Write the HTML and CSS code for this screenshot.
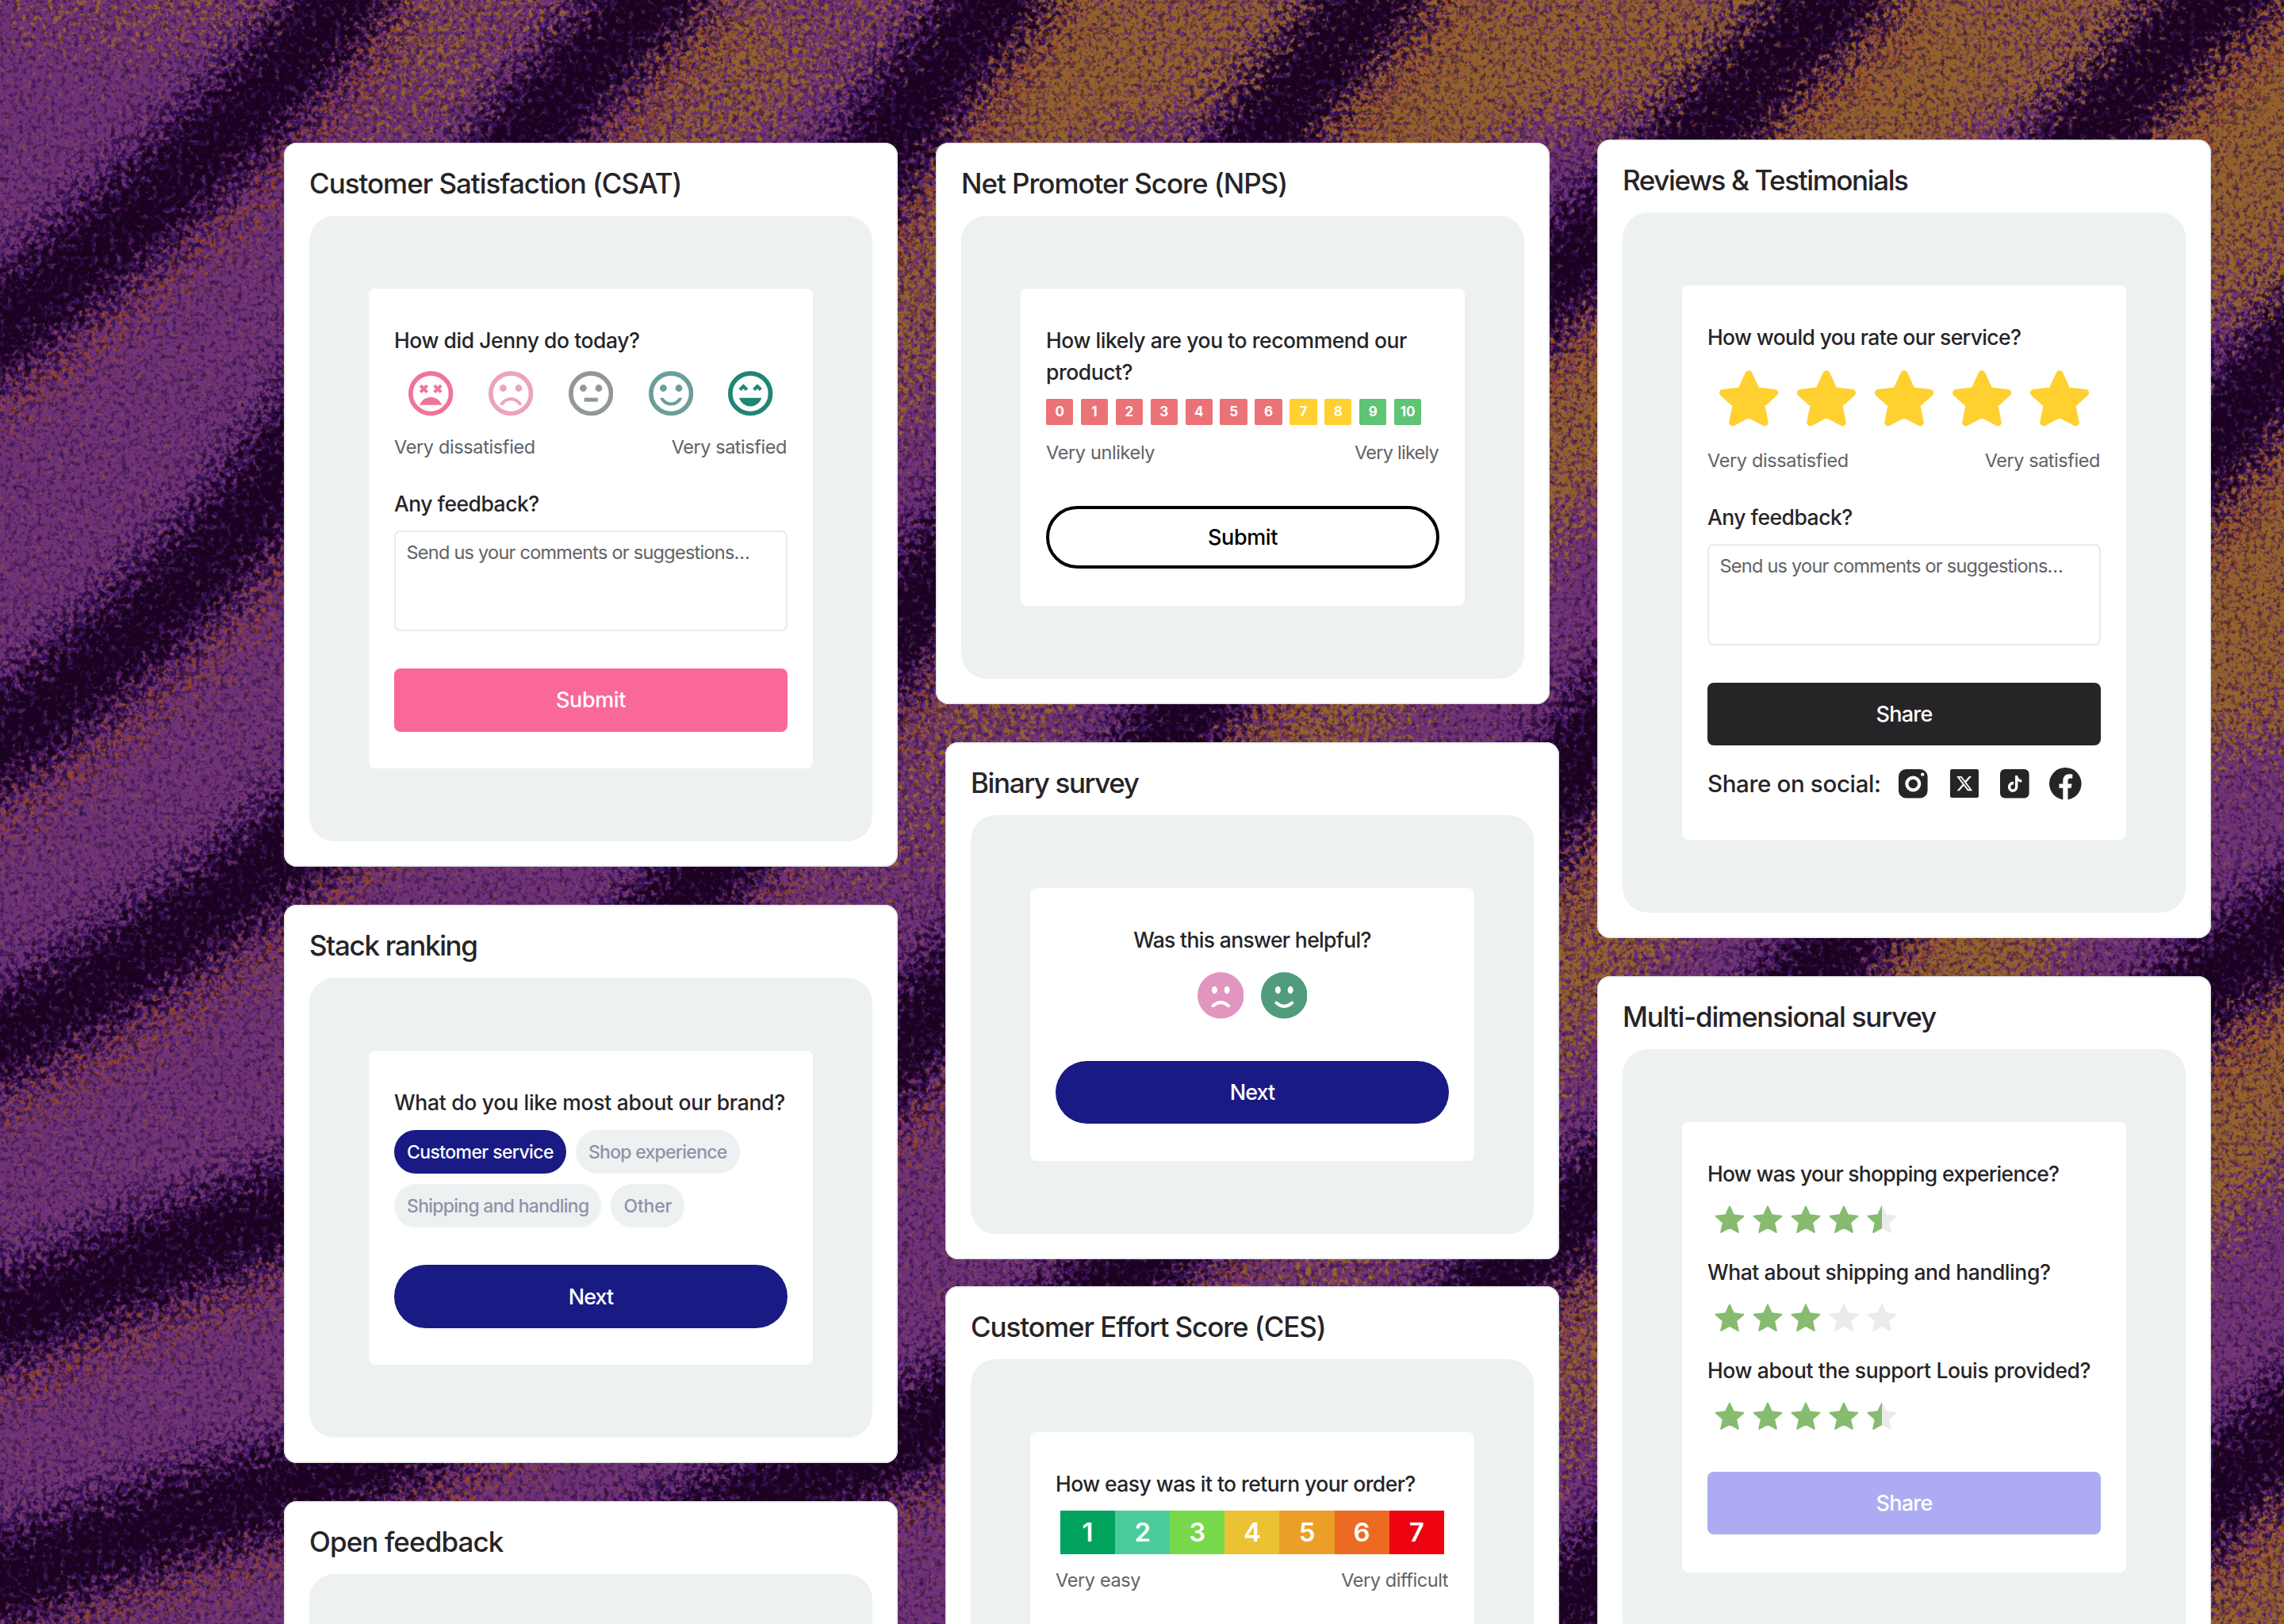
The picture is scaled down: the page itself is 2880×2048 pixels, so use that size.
FILE: index.html
```html
<!DOCTYPE html>
<html lang="en">
<head>
<meta charset="utf-8">
<title>Survey templates</title>
<link rel="stylesheet" href="styles.css">
</head>
<body>
<svg class="backdrop" viewBox="0 0 2880 2048" aria-hidden="true">
  <defs>
    <filter id="grain-brown" filterUnits="userSpaceOnUse" x="0" y="0" width="2880" height="2048" color-interpolation-filters="sRGB">
      <feGaussianBlur in="SourceAlpha" stdDeviation="38" result="soft"/>
      <feTurbulence type="fractalNoise" baseFrequency="0.15" numOctaves="3" seed="4"/>
      <feColorMatrix values="0 0 0 0 0  0 0 0 0 0  0 0 0 0 0  2.8 0 0 0 -0.9" result="noise"/>
      <feComposite in="soft" in2="noise" operator="arithmetic" k1="0" k2="0.54" k3="0.46" k4="0"/>
      <feComponentTransfer result="mask"><feFuncA type="linear" slope="5" intercept="-1.95"/></feComponentTransfer>
      <feFlood flood-color="#96622c"/>
      <feComposite in2="mask" operator="in"/>
    </filter>
    <filter id="grain-orange" filterUnits="userSpaceOnUse" x="0" y="0" width="2880" height="2048" color-interpolation-filters="sRGB">
      <feGaussianBlur in="SourceAlpha" stdDeviation="28" result="soft"/>
      <feTurbulence type="fractalNoise" baseFrequency="0.14" numOctaves="3" seed="21"/>
      <feColorMatrix values="0 0 0 0 0  0 0 0 0 0  0 0 0 0 0  2.8 0 0 0 -0.9" result="noise"/>
      <feComposite in="soft" in2="noise" operator="arithmetic" k1="0" k2="0.54" k3="0.46" k4="0"/>
      <feComponentTransfer result="mask"><feFuncA type="linear" slope="5" intercept="-2.2"/></feComponentTransfer>
      <feFlood flood-color="#93442c"/>
      <feComposite in2="mask" operator="in"/>
    </filter>
    <filter id="grain-indigo" filterUnits="userSpaceOnUse" x="0" y="0" width="2880" height="2048" color-interpolation-filters="sRGB">
      <feGaussianBlur in="SourceAlpha" stdDeviation="38" result="soft"/>
      <feTurbulence type="fractalNoise" baseFrequency="0.15" numOctaves="3" seed="9"/>
      <feColorMatrix values="0 0 0 0 0  0 0 0 0 0  0 0 0 0 0  2.8 0 0 0 -0.9" result="noise"/>
      <feComposite in="soft" in2="noise" operator="arithmetic" k1="0" k2="0.52" k3="0.48" k4="0"/>
      <feComponentTransfer result="mask"><feFuncA type="linear" slope="4" intercept="-1.65"/></feComponentTransfer>
      <feFlood flood-color="#35105a"/>
      <feComposite in2="mask" operator="in"/>
    </filter>
    <filter id="grain-dark" filterUnits="userSpaceOnUse" x="0" y="0" width="2880" height="2048" color-interpolation-filters="sRGB">
      <feGaussianBlur in="SourceAlpha" stdDeviation="30" result="soft"/>
      <feTurbulence type="fractalNoise" baseFrequency="0.13" numOctaves="3" seed="13"/>
      <feColorMatrix values="0 0 0 0 0  0 0 0 0 0  0 0 0 0 0  2.8 0 0 0 -0.9" result="noise"/>
      <feComposite in="soft" in2="noise" operator="arithmetic" k1="0" k2="0.54" k3="0.46" k4="0"/>
      <feComponentTransfer result="mask"><feFuncA type="linear" slope="3.2" intercept="-1.17"/></feComponentTransfer>
      <feFlood flood-color="#1b0220"/>
      <feComposite in2="mask" operator="in"/>
    </filter>
    <filter id="speckle" filterUnits="userSpaceOnUse" x="0" y="0" width="2880" height="2048" color-interpolation-filters="sRGB">
      <feTurbulence type="fractalNoise" baseFrequency="0.17" numOctaves="3" seed="30"/>
      <feColorMatrix values="0 0 0 0 0.16  0 0 0 0 0.05  0 0 0 0 0.34  5 0 0 0 -2.75"/>
    </filter>
    <g id="bands">
      <path d="M470 -60Q380 80 240 210T-60 460"/>
      <path d="M880 -60Q740 80 672 160Q500 400 350 600Q220 780 -60 980"/>
      <path d="M1310 -60Q1200 60 1124 170Q760 700 350 1080Q180 1220 -60 1340"/>
      <path d="M1790 -60Q1690 40 1600 160Q1380 480 1150 770Q1000 950 878 1117Q620 1430 350 1530Q180 1590 -60 1690"/>
      <path d="M2370 -60Q2260 50 2146 170Q2070 250 1990 320Q1740 560 1485 912Q1320 1140 1150 1300Q740 1760 350 1880Q180 1920 -60 2020"/>
      <path d="M2860 -60Q2750 40 2643 160Q2300 560 1990 960Q1740 1330 1420 1605Q1290 1720 1150 1810Q800 1960 500 2120"/>
      <path d="M2960 380Q2880 450 2830 510Q2560 830 2310 1205Q2140 1400 1990 1525Q1800 1700 1600 1900L1400 2100"/>
      <path d="M2960 1120Q2860 1180 2780 1240Q2400 1640 1990 2010L1860 2120"/>
      <path d="M2960 1740Q2780 1880 2560 2120"/>
    </g>
    <linearGradient id="sun" gradientUnits="userSpaceOnUse" x1="2300" y1="300" x2="1000" y2="1250">
      <stop offset="0" stop-color="#fff"/><stop offset=".35" stop-color="#ccc"/><stop offset=".7" stop-color="#888"/><stop offset="1" stop-color="#000"/>
    </linearGradient>
    <mask id="sunny" maskUnits="userSpaceOnUse" x="-200" y="-200" width="3300" height="2500"><rect x="-200" y="-200" width="3300" height="2500" fill="url(#sun)"/></mask>
  </defs>
  <rect width="2880" height="2048" fill="#703277"/>
  <g filter="url(#grain-brown)">
    <g mask="url(#sunny)">
      <use href="#bands" class="band" x="100" y="100" stroke-width="180"/>
    </g>
    <path d="M1300 -60H2900V60L2700 160H1300L1200 100Z" opacity=".75"/>
    <path d="M-60 -60H1300L1160 110L40 60Z" opacity=".34"/>
    <path d="M2800 100H2960V420L2800 440ZM2800 560H2960V960L2800 940Z" opacity=".7"/>
  </g>
  <g filter="url(#grain-orange)"><use href="#bands" class="band" x="48" y="66" stroke-width="60" opacity=".62"/></g>
  <rect width="2880" height="2048" filter="url(#speckle)" opacity=".6"/>
  <g filter="url(#grain-indigo)"><use href="#bands" class="band" stroke-width="140" opacity=".8"/></g>
  <g filter="url(#grain-dark)"><use href="#bands" class="band" stroke-width="100"/></g>
</svg>

<svg class="symbols" aria-hidden="true">
  <symbol id="star-lg" viewBox="-37 0 74 71">
    <path d="M0 4.7L9.6 25.6L32.6 28.4L15.8 43.4L20.2 65.8L0 55L-20.2 65.8L-15.8 43.4L-32.6 28.4L-9.6 25.6Z" fill="#ffd02f" stroke="#ffd02f" stroke-width="9" stroke-linejoin="round"/>
  </symbol>
  <symbol id="star-sm" viewBox="-19 0 38 36">
    <path d="M0 1.6L4.9 12.2L17.4 13.7L8.1 21.8L10.8 34L0 27.8L-10.8 34L-8.1 21.8L-17.4 13.7L-4.9 12.2Z" fill="currentColor" stroke="currentColor" stroke-width="2" stroke-linejoin="round"/>
  </symbol>
  <symbol id="star-half" viewBox="-19 0 38 36">
    <path d="M0 1.6L4.9 12.2L17.4 13.7L8.1 21.8L10.8 34L0 27.8L-10.8 34L-8.1 21.8L-17.4 13.7L-4.9 12.2Z" fill="#ebebeb" stroke="#ebebeb" stroke-width="2" stroke-linejoin="round"/>
    <path d="M0 .6L-1 1.4L-5.5 11.3L-17.6 12.7Q-19 13.5 -18 14.6L-9.3 22.2L-11.8 34Q-11.6 35.3 -10.4 34.9L0 28.9Z" fill="#86bb70"/>
  </symbol>
</svg>

<main class="board">
  <div class="column column-left">
    <section class="card csat">
      <h2 class="title">Customer Satisfaction (CSAT)</h2>
      <div class="panel"><div class="survey">
        <p class="question">How did Jenny do today?</p>
        <div class="faces">
          <svg viewBox="-28.2 -28.2 56.4 56.4" color="#f07398"><circle r="25.3" class="ring"/><path d="M-13 -10L-4.6 -1.6M-4.6 -10L-13 -1.6M4.6 -10L13 -1.6M13 -10L4.6 -1.6" class="line cross"/><path d="M-14 14.6A14.8 14.8 0 0 1 14 14.6Z" class="solid"/></svg>
          <svg viewBox="-28.2 -28.2 56.4 56.4" color="#eba4bf"><circle r="25.3" class="ring"/><circle cx="-9.8" cy="-6.7" r="4.4" class="solid"/><circle cx="9.8" cy="-6.7" r="4.4" class="solid"/><path d="M-14.2 14.6A15.2 15.2 0 0 1 14.2 14.6H9.6A11 11 0 0 0 -9.6 14.6Z" class="solid"/></svg>
          <svg viewBox="-28.2 -28.2 56.4 56.4" color="#929896"><circle r="25.3" class="ring"/><circle cx="-9.8" cy="-6.7" r="4.4" class="solid"/><circle cx="9.8" cy="-6.7" r="4.4" class="solid"/><rect x="-8.6" y="5.4" width="17.2" height="5" class="solid"/></svg>
          <svg viewBox="-28.2 -28.2 56.4 56.4" color="#6b9e9a"><circle r="25.3" class="ring"/><circle cx="-9.8" cy="-6.7" r="4.4" class="solid"/><circle cx="9.8" cy="-6.7" r="4.4" class="solid"/><path d="M-14.2 5.6A15.2 15.2 0 0 0 14.2 5.6H9.6A11 11 0 0 1 -9.6 5.6Z" class="solid"/></svg>
          <svg viewBox="-28.2 -28.2 56.4 56.4" color="#1f8577"><circle r="25.3" class="ring"/><path d="M-13.2 -4.6L-8.8 -9L-4.4 -4.6M4.4 -4.6L8.8 -9L13.2 -4.6" class="line thick"/><path d="M-14.2 5.6A14.8 14.8 0 0 0 14.2 5.6Z" class="solid"/></svg>
        </div>
        <div class="labels"><span class="low">Very dissatisfied</span><span class="high">Very satisfied</span></div>
        <p class="question prompt">Any feedback?</p>
        <div class="textarea">Send us your comments or suggestions…</div>
        <div class="button pink submit">Submit</div>
      </div></div>
    </section>

    <section class="card stack">
      <h2 class="title">Stack ranking</h2>
      <div class="panel"><div class="survey">
        <p class="question">What do you like most about our brand?</p>
        <div class="chips">
          <span class="chip chip-service">Customer service</span>
          <span class="chip chip-shop">Shop experience</span>
          <span class="chip chip-shipping">Shipping and handling</span>
          <span class="chip chip-other">Other</span>
        </div>
        <div class="button navy next">Next</div>
      </div></div>
    </section>

    <section class="card open">
      <h2 class="title">Open feedback</h2>
      <div class="panel"></div>
    </section>
  </div>

  <div class="column column-middle">
    <section class="card nps">
      <h2 class="title">Net Promoter Score (NPS)</h2>
      <div class="panel"><div class="survey">
        <p class="question">How likely are you to recommend our<br>product?</p>
        <div class="scores">
          <span class="score red">0</span><span class="score red">1</span><span class="score red">2</span><span class="score red">3</span><span class="score red">4</span><span class="score red">5</span><span class="score red">6</span><span class="score yellow">7</span><span class="score yellow">8</span><span class="score green">9</span><span class="score green">10</span>
        </div>
        <div class="labels"><span class="low">Very unlikely</span><span class="high">Very likely</span></div>
        <div class="button outline submit">Submit</div>
      </div></div>
    </section>

    <div class="shifted">
      <section class="card binary">
        <h2 class="title">Binary survey</h2>
        <div class="panel"><div class="survey">
          <p class="question">Was this answer helpful?</p>
          <div class="pair">
            <svg viewBox="-29.3 -29.3 58.6 58.6"><circle r="29.3" fill="#e096be"/><ellipse cx="-7.9" cy="-6.8" rx="3.5" ry="4.7" fill="#fff"/><ellipse cx="7.9" cy="-6.8" rx="3.5" ry="4.7" fill="#fff"/><path d="M-9.8 13.2Q0 4.6 9.8 13.2" class="mouth"/></svg>
            <svg viewBox="-29.3 -29.3 58.6 58.6"><circle r="29.3" fill="#509c7c"/><ellipse cx="-7.9" cy="-6.8" rx="3.5" ry="4.7" fill="#fff"/><ellipse cx="7.9" cy="-6.8" rx="3.5" ry="4.7" fill="#fff"/><path d="M-9.8 9.4Q0 18 9.8 9.4" class="mouth"/></svg>
          </div>
          <div class="button navy next">Next</div>
        </div></div>
      </section>

      <section class="card ces">
        <h2 class="title">Customer Effort Score (CES)</h2>
        <div class="panel"><div class="survey">
          <p class="question">How easy was it to return your order?</p>
          <div class="effort">
            <span class="step step-1">1</span><span class="step step-2">2</span><span class="step step-3">3</span><span class="step step-4">4</span><span class="step step-5">5</span><span class="step step-6">6</span><span class="step step-7">7</span>
          </div>
          <div class="labels"><span class="low">Very easy</span><span class="high">Very difficult</span></div>
        </div></div>
      </section>
    </div>
  </div>

  <div class="column column-right">
    <section class="card reviews">
      <h2 class="title">Reviews &amp; Testimonials</h2>
      <div class="panel"><div class="survey">
        <p class="question">How would you rate our service?</p>
        <div class="stars-lg">
          <svg><use href="#star-lg"/></svg><svg><use href="#star-lg"/></svg><svg><use href="#star-lg"/></svg><svg><use href="#star-lg"/></svg><svg><use href="#star-lg"/></svg>
        </div>
        <div class="labels"><span class="low">Very dissatisfied</span><span class="high">Very satisfied</span></div>
        <p class="question prompt">Any feedback?</p>
        <div class="textarea">Send us your comments or suggestions…</div>
        <div class="button black share">Share</div>
        <div class="social">
          <span class="social-label">Share on social:</span>
          <svg class="instagram" viewBox="0 0 36.6 36.6"><rect width="36.6" height="36.6" rx="9.5" fill="#262427"/><circle cx="18.3" cy="18.5" r="7.9" fill="none" stroke="#fff" stroke-width="4.2"/><circle cx="30.2" cy="6.6" r="2.2" fill="#fff"/></svg>
          <svg class="x" viewBox="0 0 36 36"><rect width="36" height="36" rx="2.5" fill="#262427"/><path transform="translate(7 6.9) scale(.93)" fill="#fff" d="M18.244 2.25h3.308l-7.227 8.26 8.502 11.24H16.17l-5.214-6.817L4.99 21.75H1.68l7.73-8.835L1.254 2.25H8.08l4.713 6.231zm-1.161 17.52h1.833L7.084 4.126H5.117z"/></svg>
          <svg class="tiktok" viewBox="0 0 36.6 36.6"><rect width="36.6" height="36.6" rx="6" fill="#262427"/><path transform="translate(8.6 8) scale(.83 .87)" fill="#fff" d="M12.525.02c1.31-.02 2.61-.01 3.91-.02.08 1.53.63 3.09 1.75 4.17 1.12 1.11 2.7 1.62 4.24 1.79v4.03c-1.44-.05-2.89-.35-4.2-.97-.57-.26-1.1-.59-1.62-.93-.01 2.92.01 5.84-.02 8.75-.08 1.4-.54 2.79-1.35 3.94-1.31 1.92-3.58 3.17-5.91 3.21-1.43.08-2.86-.31-4.08-1.03-2.02-1.19-3.44-3.37-3.65-5.71-.02-.5-.03-1-.01-1.49.18-1.9 1.12-3.72 2.58-4.96 1.66-1.44 3.98-2.13 6.15-1.72.02 1.48-.04 2.96-.04 4.44-.99-.32-2.15-.23-3.02.37-.63.41-1.11 1.04-1.36 1.75-.21.51-.15 1.07-.14 1.61.24 1.64 1.82 3.02 3.5 2.87 1.12-.01 2.19-.66 2.77-1.61.19-.33.4-.67.41-1.06.1-1.79.06-3.57.07-5.36.01-4.03-.01-8.05.02-12.07z"/></svg>
          <svg class="facebook" viewBox="-20.3 -20.3 40.6 40.6"><circle r="20.3" fill="#262427"/><path fill="#fff" d="M-3 21V5.5h-4.9V.2H-3v-3.5c0-5.8 3-8.8 8-8.8 1.6 0 3 .1 4 .3v5H6.6c-2.6 0-3.4 1.3-3.4 3.3V.2h5l-.9 5.3H3.2V21z"/></svg>
        </div>
      </div></div>
    </section>

    <section class="card multi">
      <h2 class="title">Multi-dimensional survey</h2>
      <div class="panel"><div class="survey">
        <p class="question q-shopping">How was your shopping experience?</p>
        <div class="stars-sm">
          <svg><use href="#star-sm"/></svg><svg><use href="#star-sm"/></svg><svg><use href="#star-sm"/></svg><svg><use href="#star-sm"/></svg><svg><use href="#star-half"/></svg>
        </div>
        <p class="question q-shipping">What about shipping and handling?</p>
        <div class="stars-sm">
          <svg><use href="#star-sm"/></svg><svg><use href="#star-sm"/></svg><svg><use href="#star-sm"/></svg><svg class="empty"><use href="#star-sm"/></svg><svg class="empty"><use href="#star-sm"/></svg>
        </div>
        <p class="question q-support">How about the support Louis provided?</p>
        <div class="stars-sm">
          <svg><use href="#star-sm"/></svg><svg><use href="#star-sm"/></svg><svg><use href="#star-sm"/></svg><svg><use href="#star-sm"/></svg><svg><use href="#star-half"/></svg>
        </div>
        <div class="button lilac share">Share</div>
      </div></div>
    </section>
  </div>
</main>
</body>
</html>
```
FILE: styles.css
```css
* { box-sizing: border-box; }

body {
  margin: 0;
  width: 2880px;
  height: 2048px;
  overflow: hidden;
  position: relative;
  background: #6b3072;
  font-family: Inter, "Open Sans", sans-serif;
  color: #262427;
}

p, h2 { margin: 0; font-weight: 500; }
svg { display: block; }

/* Grainy striped backdrop behind the cards */
.backdrop {
  position: absolute;
  left: 0;
  top: 0;
  width: 2880px;
  height: 2048px;
}
.symbols { position: absolute; width: 0; height: 0; }
.band { fill: none; stroke: #000; }

.board {
  position: relative;
  display: grid;
  grid-template-columns: 774px 786px 774px;
  column-gap: 48px;
  align-items: start;
  padding: 176px 0 0 358px;
  height: 2048px;
  overflow: hidden;
}
.column { display: flex; flex-direction: column; gap: 48px; }
.column-left, .column-middle { padding-top: 4px; }
.shifted { display: flex; flex-direction: column; gap: 34px; padding-left: 12px; }

/* Card shell */
.card {
  width: 774px;
  padding: 29px 32px 32px;
  background: #fff;
  border-radius: 16px;
  box-shadow: inset 0 0 0 1.5px #e2e4e4;
}
.title { font-size: 35px; line-height: 44px; margin-bottom: 19px; white-space: nowrap; }
.panel { background: #edf1f2; border-radius: 32px; padding: 92px 75px; }
.survey { background: #fff; border-radius: 8px; padding: 45px 32px 46.7px; }

.question { font-size: 26.5px; line-height: 40px; white-space: nowrap; letter-spacing: -0.45px; }
.prompt { margin-top: 35px; letter-spacing: -0.5px; }
.labels {
  display: flex;
  justify-content: space-between;
  font-size: 23.5px;
  line-height: 32px;
  color: #626264;
  padding-right: 1px;
  letter-spacing: -0.37px;
}
.high { letter-spacing: -0.45px; }
.textarea {
  margin-top: 14px;
  height: 127.5px;
  border: 2px solid #e9e9f0;
  border-radius: 8px;
  padding: 10px 13.5px;
  font-size: 23.5px;
  line-height: 32px;
  letter-spacing: -0.75px;
  color: #626264;
}
.button {
  height: 79.2px;
  border-radius: 8px;
  display: flex;
  align-items: center;
  justify-content: center;
  font-size: 27px;
  font-weight: 500;
  color: #fff;
}
.submit { letter-spacing: -0.4px; }
.share { letter-spacing: -0.75px; }
.next { letter-spacing: -1px; }
.pink { background: #fa6899; }
.navy { background: #191a83; border-radius: 40px; }
.black { background: #262427; }
.lilac { background: #adacf2; }
.outline { background: #fff; color: #000; border: 4px solid #000; border-radius: 40px; }

/* CSAT */
.csat .title { letter-spacing: -1.04px; }
.faces { display: flex; gap: 44.4px; margin: 19.3px 0 0 18.3px; }
.faces svg { width: 56.4px; height: 56.4px; }
.ring { fill: none; stroke: currentColor; stroke-width: 5.7; }
.solid { fill: currentColor; }
.line { fill: none; stroke: currentColor; }
.thick { stroke-width: 4.3; }
.cross { stroke-width: 4; }
.mouth { fill: none; stroke: #fff; stroke-width: 4; stroke-linecap: round; }
.csat .labels { margin-top: 23px; }
.csat .button, .reviews .button { margin-top: 47.2px; }

/* Stack ranking */
.stack .title { letter-spacing: -1.34px; }
.stack .question { letter-spacing: -0.28px; }
.chips { display: flex; flex-wrap: wrap; gap: 12.3px 12px; margin-top: 14.5px; }
.chip {
  height: 55.7px;
  line-height: 56.5px;
  padding: 0 16px;
  border-radius: 28px;
  background: #edf1f2;
  color: #9092a8;
  font-size: 23px;
  font-weight: 500;
  white-space: nowrap;
}
.chip-service { background: #191a83; color: #fff; letter-spacing: -0.6px; }
.chip-shop { letter-spacing: -0.73px; }
.chip-shipping { letter-spacing: -0.73px; }
.chip-other { letter-spacing: -0.2px; }
.stack .button { margin-top: 47px; }

/* Open feedback */
.open .title { letter-spacing: -0.9px; }
.open .panel { height: 400px; }

/* NPS */
.nps .title { letter-spacing: -1.05px; }
.scores { display: flex; gap: 9.6px; margin: 13.6px 0 0 0; }
.score {
  width: 34.3px;
  height: 33.5px;
  line-height: 33.5px;
  border-radius: 2px;
  text-align: center;
  color: #fff;
  font-size: 17px;
  font-weight: 700;
}
.red { background: #eb7377; }
.yellow { background: #ffd02f; }
.green { background: #5fc475; }
.nps .labels { margin-top: 18.7px; }
.nps .high { letter-spacing: -0.75px; }
.nps .button { margin-top: 51.3px; }

/* Binary */
.binary .title { letter-spacing: -1.4px; }
.binary .question { text-align: center; letter-spacing: -0.66px; }
.pair { display: flex; justify-content: center; gap: 21.5px; margin-top: 21px; }
.pair svg { width: 58.6px; height: 58.6px; }
.binary .button { margin-top: 53.2px; }

/* CES */
.ces .title { letter-spacing: -1.07px; }
.ces .question { letter-spacing: -0.56px; }
.effort { display: grid; grid-template-columns: repeat(7, 1fr); width: 483.8px; margin: 14px 0 0 6px; }
.step {
  height: 55px;
  line-height: 55px;
  text-align: center;
  color: #fff;
  font-size: 33px;
  font-weight: 600;
}
.step-1 { background: #02a35f; }
.step-2 { background: #4bcb9c; }
.step-3 { background: #76d84a; }
.step-4 { background: #eac234; }
.step-5 { background: #eb9f28; }
.step-6 { background: #ed6a22; }
.step-7 { background: #ed020f; }
.ces .labels { margin-top: 17.3px; }
.ces .survey { height: 400px; }

/* Reviews */
.reviews .title { letter-spacing: -1.4px; }
.reviews .question { letter-spacing: -0.63px; }
.reviews .prompt { letter-spacing: -0.5px; }
.reviews .survey { padding-bottom: 51px; }
.stars-lg { display: flex; gap: 24px; margin: 22.4px 0 0 14.7px; }
.stars-lg svg { width: 74px; height: 71px; }
.reviews .labels { margin-top: 27px; }
.social { display: flex; align-items: center; height: 40px; margin-top: 28px; }
.social-label { font-size: 29.5px; font-weight: 500; letter-spacing: -0.35px; width: 241px; white-space: nowrap; }
.instagram { width: 36.6px; height: 36.6px; margin-right: 28px; }
.x { width: 36px; height: 36px; margin-right: 27.8px; }
.tiktok { width: 36.6px; height: 36.6px; margin-right: 25.2px; }
.facebook { width: 40.6px; height: 40.6px; }

/* Multi-dimensional */
.multi .title { letter-spacing: -1.2px; }
.multi .survey { height: 568px; }
.q-shopping { letter-spacing: -0.72px; }
.q-shipping { letter-spacing: -0.42px; margin-top: 27.6px; }
.q-support { letter-spacing: -0.4px; margin-top: 27.6px; }
.stars-sm { display: flex; gap: 10px; margin: 20.2px 0 0 8.7px; color: #86bb70; }
.stars-sm svg { width: 38px; height: 36px; }
.empty { color: #ebebeb; }
.multi .button { margin-top: 52px; }
```
